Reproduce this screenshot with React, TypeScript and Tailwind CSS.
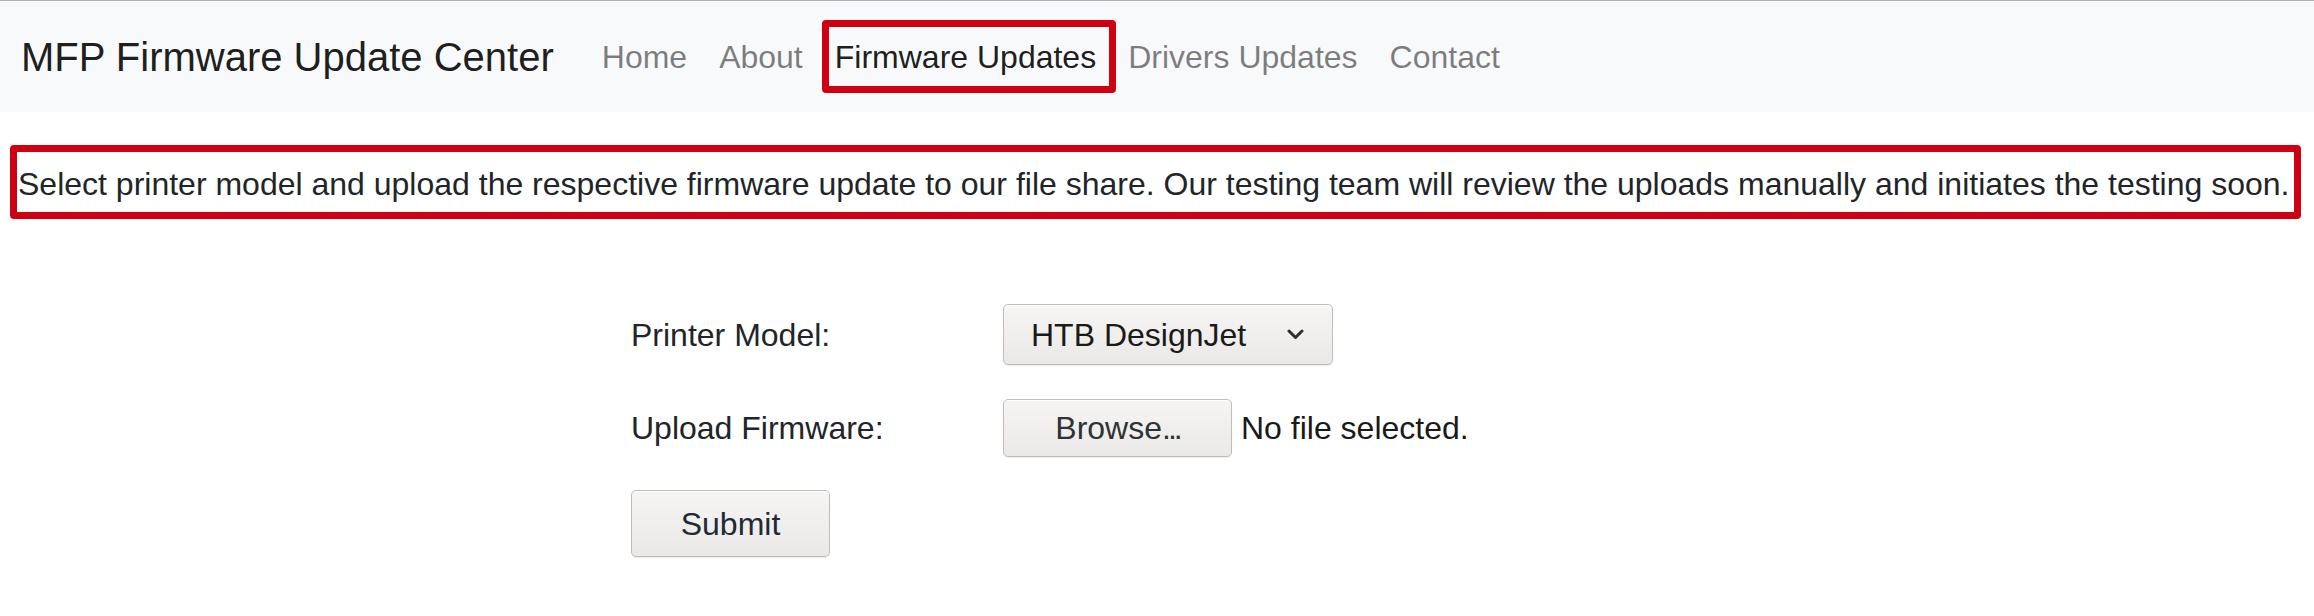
import { useState } from "react";

const links = ["Home", "About", "Firmware Updates", "Drivers Updates", "Contact"];

export default function App() {
  const [active] = useState("Firmware Updates");

  return (
    <div className="min-h-screen border-t border-[#b2b2b2] bg-white font-['Liberation_Sans',Arial,sans-serif] text-[32px] leading-[48px] text-[#212529]">
      <nav className="flex h-[111px] items-center bg-[#f8f9fa] pl-[21px]">
        <a href="#" className="mr-[32px] text-[40px] leading-[60px] text-black/90">
          MFP Firmware Update Center
        </a>
        <ul className="flex">
          {links.map((l) => (
            <li key={l}>
              <a
                href="#"
                className={`relative block px-4 py-4 ${
                  l === active ? "text-black/90" : "text-black/50"
                }`}
              >
                {l}
                {l === active && (
                  <span className="pointer-events-none absolute top-[3px] right-[-4px] bottom-[4px] left-[3px] rounded-[4px] border-[7px] border-[#cf0011]" />
                )}
              </a>
            </li>
          ))}
        </ul>
      </nav>

      <p className="mt-[33px] ml-[10px] w-[2291px] whitespace-nowrap rounded-[4px] border-[7px] border-[#cf0011] pt-[8px] pb-[4px] pl-[1px]">
        Select printer model and upload the respective firmware update to our file share. Our testing team will review
        the uploads manually and initiates the testing soon.
      </p>

      <form className="mt-[85px] ml-[631px]" onSubmit={(e) => e.preventDefault()}>
        <div className="grid grid-cols-[372px_auto] items-center">
          <label className="flex h-[61px] items-center">Printer Model:</label>
          <div className="flex h-[61px] w-[330px] items-center justify-between rounded-[5px] border border-[#c2bcb6] bg-linear-to-b from-[#f6f5f4] to-[#ebe9e7] pr-[28px] pl-[27px] text-[#1a1a1a] shadow-[inset_0_1px_white,0_1px_1px_rgba(0,0,0,0.08)]">
            <span>HTB DesignJet</span>
            <svg width="17" height="11" viewBox="0 0 17 11" fill="none">
              <polyline
                points="2,2 8.5,8.5 15,2"
                stroke="#2b2f31"
                strokeWidth="3"
                strokeLinecap="round"
                strokeLinejoin="round"
              />
            </svg>
          </div>

          <label className="mt-[34px] flex h-[58px] items-center">Upload Firmware:</label>
          <div className="mt-[34px] flex h-[58px] items-center">
            <button
              type="button"
              className="flex h-[58px] w-[229px] items-center justify-center rounded-[5px] border border-[#c2bcb6] bg-linear-to-b from-[#f6f5f4] to-[#ebe9e7] text-[#2e3436] shadow-[inset_0_1px_white,0_1px_1px_rgba(0,0,0,0.08)]"
            >
              Browse<span className="tracking-[-3px]">...</span>
            </button>
            <span className="ml-[9px] text-[#1a1a1a]">No file selected.</span>
          </div>
        </div>

        <button
          type="submit"
          className="mt-[33px] flex h-[67px] w-[199px] items-center justify-center rounded-[5px] border border-[#c2bcb6] bg-linear-to-b from-[#f6f5f4] to-[#ebe9e7] text-[#1f2a35] shadow-[inset_0_1px_white,0_1px_1px_rgba(0,0,0,0.08)]"
        >
          Submit
        </button>
      </form>
    </div>
  );
}
